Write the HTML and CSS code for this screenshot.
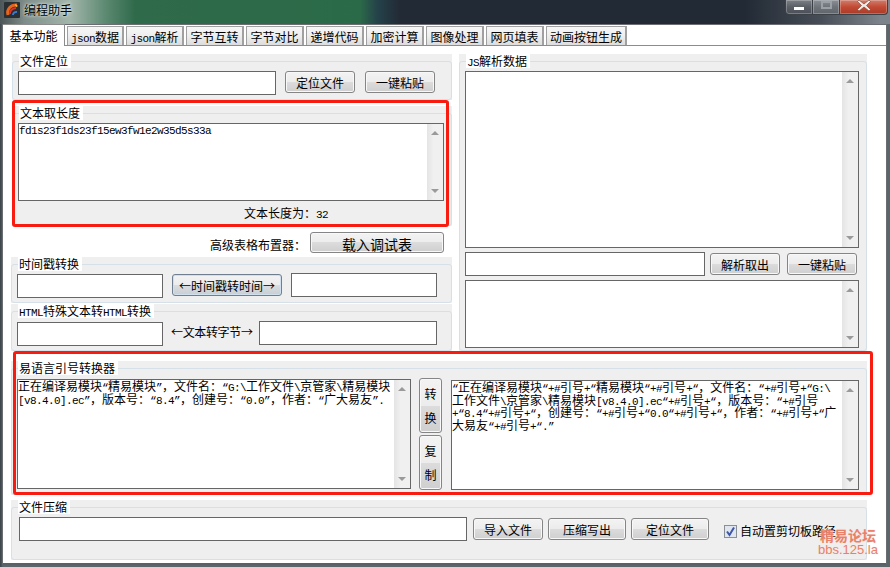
FILE: index.html
```html
<!DOCTYPE html>
<html lang="zh-CN">
<head>
<meta charset="utf-8">
<title>编程助手</title>
<link rel="stylesheet" href="styles.css">
</head>
<body>
<div class="desktop">
  <header class="titlebar">
    <svg class="app-icon" width="16" height="16" viewBox="0 0 16 16">
      <rect width="16" height="16" rx="1" fill="#2a2f33"/>
      <path d="M4 13C2.500 7 7 2.500 13 3" fill="none" stroke="#e8661c" stroke-width="3"/>
      <path d="M6 12C5.500 9 8 6.500 12 6" fill="none" stroke="#d9342a" stroke-width="2"/>
      <path d="M9 13c0-2 2-3.500 4-3" fill="none" stroke="#3a7bd5" stroke-width="2"/>
      <path d="M11 2l3 2-2 1z" fill="#f3c531"/>
    </svg>
    <span class="app-name">编程助手</span>
    <div class="win-buttons">
      <div class="win-btn win-min"><span class="glyph-min"></span></div>
      <div class="win-btn win-max"><span class="glyph-max"></span></div>
      <div class="win-btn win-close">
        <svg width="14" height="11" viewBox="0 0 14 11"><path d="M2 0l5 4 5-4 1.500 1.500L9.500 5.500l4 4-1.500 1.500-5-4-5 4L.5 9.500l4-4-4-4z" fill="#f2e8e4" stroke="#7a3a2c" stroke-width=".6"/></svg>
      </div>
    </div>
  </header>

  <main class="window">
    <nav class="tabs">
      <div class="tab tab-active">基本功能</div>
      <div class="tab tab-narrow"><span class="m">json</span>数据</div>
      <div class="tab"><span class="m">json</span>解析</div>
      <div class="tab">字节互转</div>
      <div class="tab">字节对比</div>
      <div class="tab">递增代码</div>
      <div class="tab">加密计算</div>
      <div class="tab">图像处理</div>
      <div class="tab">网页填表</div>
      <div class="tab tab-wide">动画按钮生成</div>
    </nav>

    <section class="panel">
      <div class="columns">
        <div class="col-left">
          <div class="group g-locate">
            <div class="box">
              <div class="legend">文件定位</div>
              <div class="row row-locate">
                <div class="field w258"></div>
                <button class="btn w70">定位文件</button>
                <button class="btn w70 next">一键粘贴</button>
              </div>
            </div>
          </div>

          <div class="group g-length">
            <div class="box">
              <div class="legend">文本取长度</div>
              <div class="field area w426 h78">
                <div class="text"><span class="m">fd1s23f1ds23f15ew3fw1e2w35d5s33a</span></div>
                <div class="scroll"><span class="up"></span><span class="down"></span></div>
              </div>
              <div class="status">文本长度为：<span class="m">32</span></div>
            </div>
            <div class="mark mark-length"></div>
          </div>

          <div class="table-row">
            <span class="table-label">高级表格布置器：</span>
            <button class="btn btn-big w134">载入调试表</button>
          </div>

          <div class="group g-time">
            <div class="box">
              <div class="legend">时间戳转换</div>
              <div class="row row-time">
                <div class="field w146"></div>
                <button class="btn btn-focus w110">←时间戳转时间→</button>
                <div class="field w146 up1"></div>
              </div>
            </div>
          </div>

          <div class="group g-html">
            <div class="box">
              <div class="legend"><span class="m">HTML</span>特殊文本转<span class="m">HTML</span>转换</div>
              <div class="row row-html">
                <div class="field w146"></div>
                <span class="arrow-label">←文本转字节→</span>
                <div class="field w178 up1"></div>
              </div>
            </div>
          </div>
        </div>

        <div class="col-right">
          <div class="group g-js">
            <div class="box">
              <div class="legend"><span class="m">JS</span>解析数据</div>
              <div class="field area w394 h177">
                <div class="text"></div>
                <div class="scroll"><span class="up"></span><span class="down"></span></div>
              </div>
              <div class="row row-parse">
                <div class="field w240"></div>
                <button class="btn w70">解析取出</button>
                <button class="btn w70">一键粘贴</button>
              </div>
              <div class="field area w394 h68">
                <div class="text"></div>
                <div class="scroll"><span class="up"></span><span class="down"></span></div>
              </div>
            </div>
          </div>
        </div>
      </div>

      <div class="group g-quote">
        <div class="box">
          <div class="legend">易语言引号转换器</div>
          <div class="row row-quote">
            <div class="field area w394 h110">
              <div class="text">正在编译易模块<span class="m">“</span>精易模块<span class="m">”</span>，文件名：<span class="m">“G:\</span>工作文件<span class="m">\</span>京管家<span class="m">\</span>精易模块<br><span class="m">[v8.4.0].ec”</span>，版本号：<span class="m">“8.4”</span>，创建号：<span class="m">“0.0”</span>，作者：<span class="m">“</span>广大易友<span class="m">”.</span></div>
              <div class="scroll"><span class="up"></span><span class="down"></span></div>
            </div>
            <div class="side-buttons">
              <button class="btn btn-tall"><span>转</span><span>换</span></button>
              <button class="btn btn-tall"><span>复</span><span>制</span></button>
            </div>
            <div class="field area w408 h110 down1">
              <div class="text"><span class="m">“</span>正在编译易模块<span class="m">“+#</span>引号<span class="m">+“</span>精易模块<span class="m">“+#</span>引号<span class="m">+“</span>，文件名：<span class="m">“+#</span>引号<span class="m">+“G:\</span><br>工作文件<span class="m">\</span>京管家<span class="m">\</span>精易模块<span class="m">[v8.4.0].ec“+#</span>引号<span class="m">+“</span>，版本号：<span class="m">“+#</span>引号<br><span class="m">+“8.4“+#</span>引号<span class="m">+“</span>，创建号：<span class="m">“+#</span>引号<span class="m">+“0.0“+#</span>引号<span class="m">+“</span>，作者：<span class="m">“+#</span>引号<span class="m">+“</span>广<br>大易友<span class="m">“+#</span>引号<span class="m">+“.”</span></div>
              <div class="scroll"><span class="up"></span><span class="down"></span></div>
            </div>
          </div>
        </div>
        <div class="mark mark-quote"></div>
      </div>

      <div class="group g-zip">
        <div class="box">
          <div class="legend">文件压缩</div>
          <div class="row row-zip">
            <div class="field w448"></div>
            <button class="btn w70">导入文件</button>
            <button class="btn w78">压缩写出</button>
            <button class="btn w78">定位文件</button>
            <label class="check">
              <svg width="13" height="13" viewBox="0 0 13 13">
                <rect x=".5" y=".5" width="12" height="12" fill="#dfe6f0" stroke="#8a8f96"/>
                <path d="M3 6.500l2.500 3.500L10 2.500" fill="none" stroke="#3f55a5" stroke-width="2"/>
              </svg>
              <span>自动置剪切板路径</span>
            </label>
          </div>
        </div>
      </div>
    </section>
  </main>

  <div class="watermark">
    <div class="wm-cn">精易论坛</div>
    <div class="wm-en">bbs.125.la</div>
  </div>
</div>
</body>
</html>
```
FILE: styles.css
```css
* { box-sizing: border-box; }
html, body { margin: 0; padding: 0; }
body {
  width: 890px;
  height: 567px;
  overflow: hidden;
  font: 12px/14px "Noto Sans CJK SC", sans-serif;
  color: #000;
}
.desktop {
  position: relative;
  width: 890px;
  height: 567px;
  background: linear-gradient(90deg, #3a4348 0, #59666a 3px, #59666a 890px);
}
.m {
  font-family: "Liberation Mono", monospace;
  font-size: 11px;
  letter-spacing: -.6px;
  line-height: 0;
}

/* title bar */
.titlebar {
  display: flex;
  align-items: flex-start;
  height: 24px;
  background: linear-gradient(90deg, #4c5557 0, #7d8c88 24px, #a3b6ab 70px, #5d8a72 105px, #2f6a4b 135px, #2b6a48 360px, #24414a 378px, #222a35 400px, #222a35 745px, #464d56 820px, #7d838a 880px);
}
.app-icon { margin: 2px 0 0 4px; }
.app-name { margin: 3px 0 0 4px; text-shadow: 0 0 4px #e8f0ea, 0 0 2px #e8f0ea; }
.win-buttons { display: flex; margin-left: auto; margin-right: 2px; }
.win-btn {
  display: flex;
  justify-content: center;
  height: 15px;
  border: 1px solid #3c4047;
  border-top: 0;
  box-shadow: inset 0 0 0 1px rgba(255,255,255,.25);
}
.win-min { width: 28px; border-radius: 0 0 0 4px; background: linear-gradient(#7c8187, #5a5f66 50%, #4b5058); }
.win-max { width: 27px; border-left: 0; background: linear-gradient(#8b9096, #6e7379 50%, #60656c); }
.win-close { width: 48px; border-left: 0; border-radius: 0 0 4px 0; background: linear-gradient(#cf7e6e, #c34a34 50%, #a93a26); align-items: flex-start; }
.glyph-min { width: 10px; height: 3px; margin-top: 7px; background: #fff; }
.glyph-max { width: 11px; height: 8px; margin-top: 1px; border: 2px solid #9aa0a6; }

/* window */
.window {
  width: 885px;
  height: 541px;
  margin-left: 2px;
  background: #fff;
  border: 1px solid #6a6e73;
  border-bottom: 2px solid #5a6068;
}
.tabs {
  display: flex;
  align-items: flex-end;
  gap: 2px;
  height: 21px;
  border-bottom: 1px solid #8c8c8c;
}
.tab {
  width: 58px;
  height: 19px;
  text-align: center;
  line-height: 20px;
  border: 1px solid #a0a0a0;
  border-width: 1px 2px 0 1px;
  background: linear-gradient(#f7f7f7, #eeeeee 50%, #dcdcdc);
}
.tab-active {
  position: relative;
  width: 62px;
  height: 22px;
  margin-bottom: -1px;
  padding-right: 0;
  line-height: 22px;
  background: #fff;
  border-color: #8c8c8c;
  border-width: 1px 1px 0 0;
}
.tab-narrow { width: 57px; }
.tab-wide { width: 81px; }

/* panel */
.panel { padding: 8px 0 0 8px; }
.columns { display: flex; gap: 7px; height: 297px; margin-left: 1px; }
.col-left { width: 440px; }
.col-right { width: 408px; }
.group { position: relative; padding-top: 7px; background: #efefef; }
.box {
  height: 100%;
  padding-left: 5px;
  border: 1px solid #d6e0e8;
  border-radius: 3px;
}
.legend {
  width: fit-content;
  height: 14px;
  margin: -8px 0 0 1px;
  padding: 0 3px 0 1px;
  line-height: 13px;
  background: #fff;
  white-space: nowrap;
}

.g-locate { height: 46px; }
.g-length { height: 120px; margin-top: 6px; }
.g-time { height: 46px; margin: 4px 0 0 -1px; }
.g-html { height: 47px; margin: 1px 0 0 -1px; }
.g-js { height: 297px; }
.g-quote { width: 856px; height: 134px; margin-top: 10px; }
.g-zip { width: 856px; height: 60px; margin-top: 5px; }

.row { display: flex; align-items: flex-start; }
.row-locate { margin-top: 3px; gap: 9px; }
.row-locate .next { margin-left: 1px; }
.row-time { margin-top: 3px; gap: 9px; }
.row-html { margin-top: 4px; gap: 8px; }
.row-parse { margin-top: 4px; margin-bottom: 4px; }
.row-parse .btn { margin-top: 1px; margin-left: 5px; }
.row-parse .btn + .btn { margin-left: 7px; }
.row-quote { margin-top: 4px; }
.row-zip { margin: 3px 0 0 2px; gap: 5px; }
.row-zip .btn { margin-top: 1px; }
.row-zip .btn:first-of-type { margin-left: 1px; }

.field { height: 24px; background: #fff; border: 1px solid #666; }
.area { display: flex; }
.g-length .field, .g-js .field { flex: none; }
.g-length .area, .g-js .area { margin-top: 3px; }
.w146 { width: 146px; }
.w178 { width: 178px; }
.w240 { width: 240px; }
.w258 { width: 258px; }
.w394 { width: 394px; }
.w408 { width: 408px; }
.w426 { width: 426px; }
.w448 { width: 448px; }
.w70 { width: 70px; }
.w78 { width: 78px; }
.w110 { width: 110px; }
.w134 { width: 134px; }
.h68 { height: 68px; }
.h78 { height: 78px; }
.h110 { height: 110px; }
.h177 { height: 177px; }
.up1 { margin-top: -1px; }
.down1 { margin: 1px 0 0 9px; }

.text { flex: 1; line-height: 12.7px; white-space: nowrap; }
.g-length .text { margin-top: -1px; }
.scroll {
  display: flex;
  flex-direction: column;
  justify-content: space-between;
  align-items: center;
  width: 16px;
  padding: 7px 0;
  background: linear-gradient(90deg, #e4e4e4, #f0f0f0 40%, #f0f0f0);
}
.up, .down { width: 0; height: 0; border-left: 4px solid transparent; border-right: 4px solid transparent; }
.up { border-bottom: 4px solid #9a9a9a; }
.down { border-top: 4px solid #9a9a9a; }

.btn {
  height: 22px;
  padding: 2px 0 0;
  font: inherit;
  color: #000;
  white-space: nowrap;
  border: 1px solid #858585;
  border-radius: 3px;
  box-shadow: inset 0 0 0 1px #f8f8f8;
  background: linear-gradient(#f3f3f3, #ececec 50%, #dcdcdc 50%, #cfcfcf);
}
.btn-focus {
  border-color: #6f7f8f;
  box-shadow: inset 0 0 0 1px #cfe0ee;
  background: linear-gradient(#f3f3f3, #ececec 50%, #d9dee2 50%, #c9ced2);
}
.btn-big { height: 21px; font-size: 14px; }
.arrow-label { width: 80px; margin-top: 3px; white-space: nowrap; text-align: center; letter-spacing: -.35px; }
.status { margin: 5px 0 0 226px; height: 14px; white-space: nowrap; }
.table-row {
  display: flex;
  justify-content: flex-end;
  align-items: center;
  gap: 4px;
  height: 21px;
  margin-top: 6px;
  padding-right: 8px;
}
.table-label { margin-top: 4px; }

.side-buttons { display: flex; flex-direction: column; gap: 2px; margin: -1px 0 0 8px; }
.btn-tall {
  display: flex;
  flex-direction: column;
  align-items: center;
  justify-content: center;
  gap: 10px;
  width: 23px;
  height: 55px;
  padding: 0;
}

.check { display: flex; align-items: center; gap: 3px; margin: 7px 0 0 10px; white-space: nowrap; }

/* annotation frames */
.mark { position: absolute; border: 3px solid #f81c10; border-radius: 3px; pointer-events: none; }
.mark-length { left: 0; top: -6px; width: 437px; height: 127px; }
.mark-quote { left: 2px; top: -10px; width: 860px; height: 144px; }

/* forum watermark */
.watermark {
  position: absolute;
  right: 12px;
  bottom: 11px;
  width: 60px;
  color: #e9806a;
  text-align: center;
  font-weight: 700;
  text-shadow: 0 0 2px #f6e4de;
}
.wm-cn { font-size: 14px; line-height: 15px; }
.wm-en { font-family: "Liberation Sans", sans-serif; font-size: 13px; line-height: 13px; font-weight: 400; }
```
